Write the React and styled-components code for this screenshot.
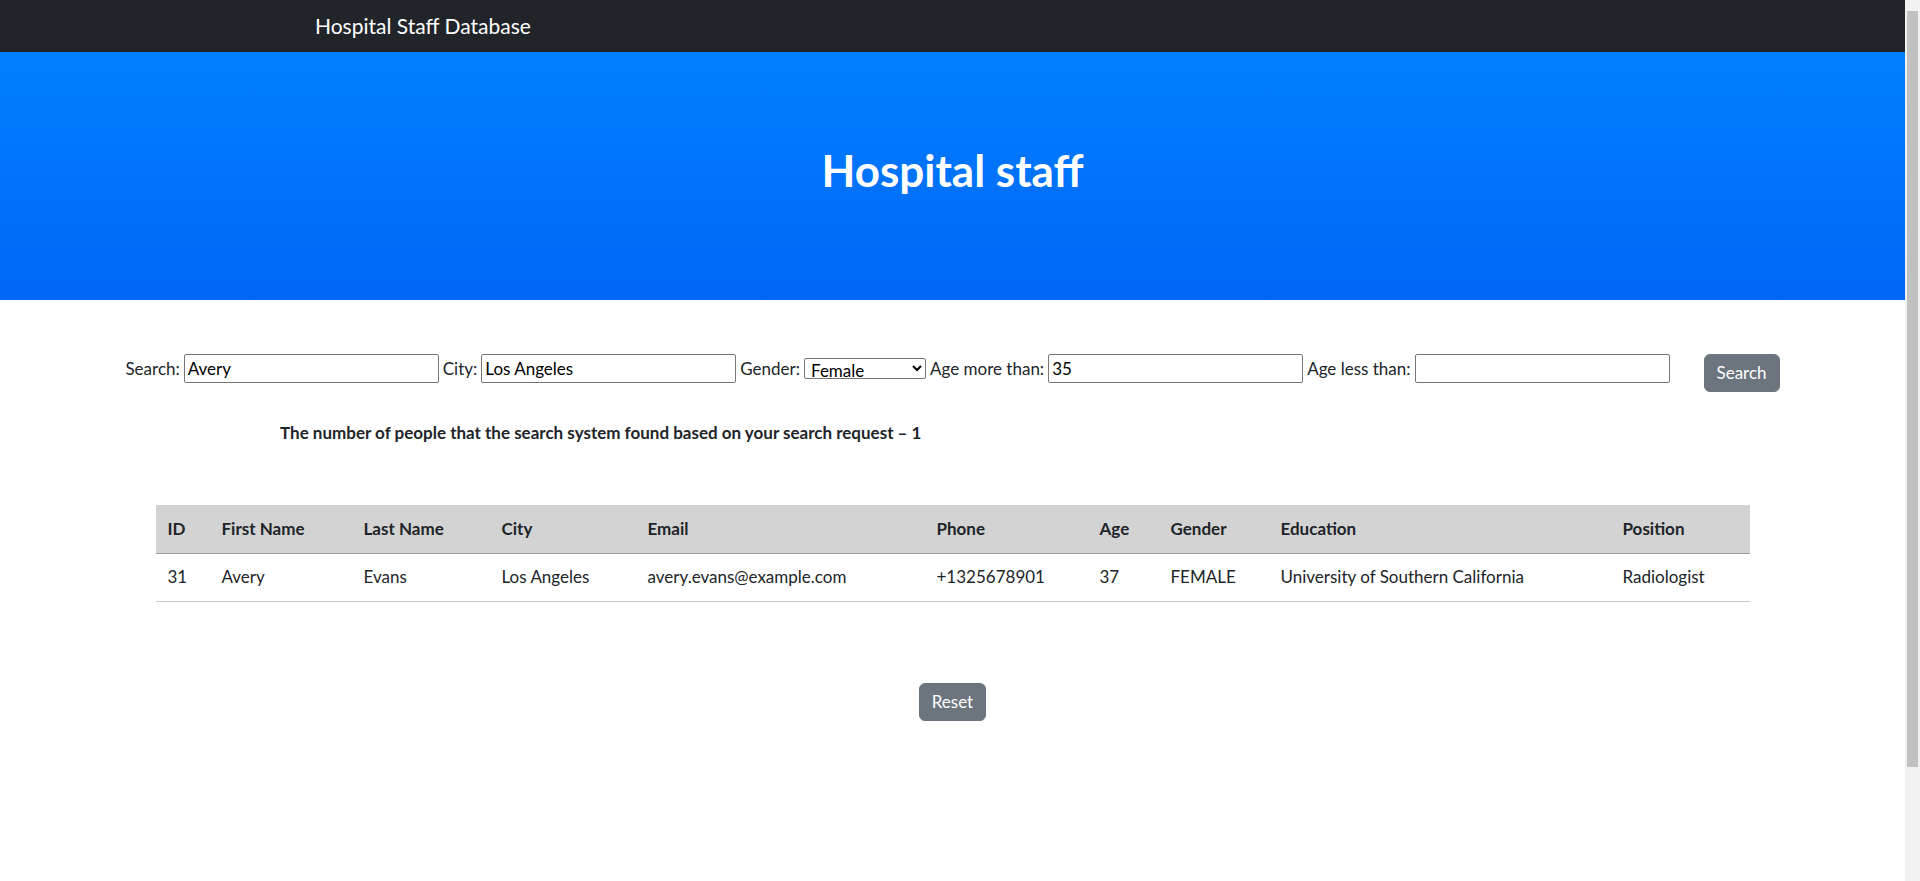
import React, { useState } from 'react';
import styled, { createGlobalStyle } from 'styled-components';

const GlobalStyle = createGlobalStyle`
  html, body {
    margin: 0;
    padding: 0;
  }
  body {
    font-family: Lato, "Noto Sans", sans-serif;
    font-size: 17px;
    line-height: 1.5;
    color: #212529;
    background: #f1f1f1;
  }
  * {
    box-sizing: border-box;
  }
`;

// the reference keeps a 15px classic scrollbar on the right
const Page = styled.div`
  width: calc(100% - 15px);
  min-height: 1010px;
  background: #fff;
  display: flex;
  flex-direction: column;
`;

const ScrollThumb = styled.div`
  position: fixed;
  top: 11px;
  right: 2px;
  width: 11px;
  height: 756px;
  background: #c1c1c1;
`;

const Navbar = styled.nav`
  height: 52px;
  background-color: #212529;
  display: flex;
  align-items: center;
  padding-left: 315px;
`;

const Brand = styled.span`
  color: #fff;
  font-size: 21px;
  line-height: 30px;
`;

const Hero = styled.header`
  height: 248px;
  background: linear-gradient(180deg, #0080ff 0%, #0066f6 100%);
  display: flex;
  align-items: center;
  justify-content: center;
  padding-bottom: 11px;
`;

const Title = styled.h1`
  margin: 0;
  color: #fff;
  font-size: 44px;
  font-weight: 700;
  line-height: 1.2;
`;

const SearchForm = styled.form`
  display: flex;
  justify-content: center;
  align-items: flex-start;
  margin-top: 54px;
`;

const Field = styled.label`
  display: flex;
  align-items: center;
  gap: 4px;
  height: 29px;
  margin-right: 4px;
  white-space: nowrap;
`;

const Input = styled.input`
  width: 255px;
  height: 29px;
  padding: 1px 3px;
  border: 1px solid #767676;
  border-radius: 2px;
  font-family: inherit;
  font-size: 17px;
  color: #000;

  &:focus {
    outline: none;
  }
`;

const Select = styled.select`
  width: 122px;
  height: 21px;
  padding: 0 2px;
  border: 1px solid #767676;
  border-radius: 2px;
  font-family: inherit;
  font-size: 17px;
  color: #000;
  background: #fff;
`;

const Button = styled.button`
  padding: 6px 12px;
  background-color: #6c757d;
  color: #fff;
  border: 1px solid #6c757d;
  border-radius: 6px;
  font-family: inherit;
  font-size: 17px;
  line-height: 24px;
  cursor: pointer;
  margin-left: ${({ $offset }) => $offset || 0};

  &:hover {
    background-color: #5c636a;
  }
`;

const Count = styled.p`
  margin: 29px 0 0;
  padding-left: 280px;
  font-weight: 700;
  line-height: 24px;
`;

const Table = styled.table`
  width: 1594px;
  margin: 60px auto 0;
  border-collapse: collapse;
  table-layout: fixed;
`;

const HeadCell = styled.th`
  background-color: #d3d3d3;
  text-align: left;
  font-weight: 700;
  padding: 0 12px;
  height: 48px;
  border-bottom: 1px solid #9e9e9e;
`;

const Cell = styled.td`
  padding: 0 12px;
  height: 48px;
  border-bottom: 1px solid #c8c8c8;
  white-space: nowrap;
`;

const ResetRow = styled.div`
  display: flex;
  justify-content: center;
  margin-top: 81px;
`;

const columns = [
  { key: 'id', label: 'ID', width: 54 },
  { key: 'firstName', label: 'First Name', width: 142 },
  { key: 'lastName', label: 'Last Name', width: 138 },
  { key: 'city', label: 'City', width: 146 },
  { key: 'email', label: 'Email', width: 289 },
  { key: 'phone', label: 'Phone', width: 163 },
  { key: 'age', label: 'Age', width: 71 },
  { key: 'gender', label: 'Gender', width: 110 },
  { key: 'education', label: 'Education', width: 342 },
  { key: 'position', label: 'Position', width: 139 },
];

const staff = [
  {
    id: 31,
    firstName: 'Avery',
    lastName: 'Evans',
    city: 'Los Angeles',
    email: 'avery.evans@example.com',
    phone: '+1325678901',
    age: 37,
    gender: 'FEMALE',
    education: 'University of Southern California',
    position: 'Radiologist',
  },
];

const App = () => {
  const [query, setQuery] = useState('Avery');
  const [city, setCity] = useState('Los Angeles');
  const [gender, setGender] = useState('FEMALE');
  const [ageFrom, setAgeFrom] = useState('35');
  const [ageTo, setAgeTo] = useState('');

  const handleSubmit = (e) => {
    e.preventDefault();
  };

  const handleReset = () => {
    setQuery('');
    setCity('');
    setGender('');
    setAgeFrom('');
    setAgeTo('');
  };

  return (
    <Page>
      <GlobalStyle />
      <ScrollThumb />
      <Navbar>
        <Brand>Hospital Staff Database</Brand>
      </Navbar>
      <Hero>
        <Title>Hospital staff</Title>
      </Hero>

      <SearchForm onSubmit={handleSubmit}>
        <Field>
          Search:
          <Input value={query} onChange={(e) => setQuery(e.target.value)} />
        </Field>
        <Field>
          City:
          <Input value={city} onChange={(e) => setCity(e.target.value)} />
        </Field>
        <Field>
          Gender:
          <Select value={gender} onChange={(e) => setGender(e.target.value)}>
            <option value="">Any</option>
            <option value="MALE">Male</option>
            <option value="FEMALE">Female</option>
          </Select>
        </Field>
        <Field>
          Age more than:
          <Input value={ageFrom} onChange={(e) => setAgeFrom(e.target.value)} />
        </Field>
        <Field>
          Age less than:
          <Input value={ageTo} onChange={(e) => setAgeTo(e.target.value)} />
        </Field>
        <Button type="submit" $offset="30px">Search</Button>
      </SearchForm>

      <Count>
        The number of people that the search system found based on your search request – {staff.length}
      </Count>

      <Table>
        <colgroup>
          {columns.map((col) => (
            <col key={col.key} style={{ width: col.width }} />
          ))}
        </colgroup>
        <thead>
          <tr>
            {columns.map((col) => (
              <HeadCell key={col.key}>{col.label}</HeadCell>
            ))}
          </tr>
        </thead>
        <tbody>
          {staff.map((person) => (
            <tr key={person.id}>
              {columns.map((col) => (
                <Cell key={col.key}>{person[col.key]}</Cell>
              ))}
            </tr>
          ))}
        </tbody>
      </Table>

      <ResetRow>
        <Button type="button" onClick={handleReset}>Reset</Button>
      </ResetRow>
    </Page>
  );
};

export default App;
